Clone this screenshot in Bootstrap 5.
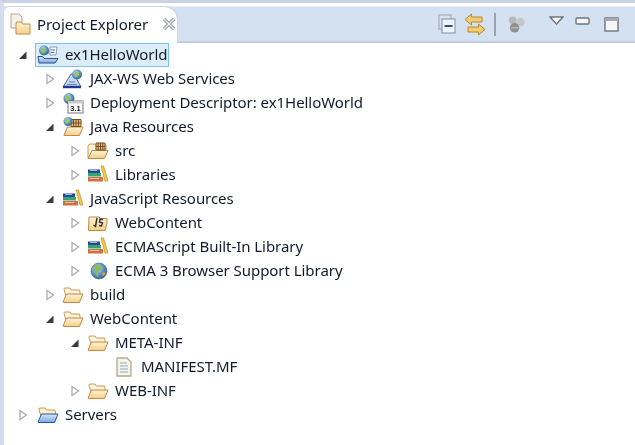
<!DOCTYPE html>
<html lang="en">
<head>
<meta charset="utf-8">
<title>Project Explorer</title>
<link href="https://cdn.jsdelivr.net/npm/bootstrap@5.3.0/dist/css/bootstrap.min.css" rel="stylesheet">
<style>
html,body{height:445px;overflow:hidden;background:#fff}
body{font-family:"Noto Sans","Open Sans",sans-serif;font-size:15px;color:#141a2b}
svg{display:block;flex:none}
.frame{height:445px;border-left:4px solid #d4ddec;border-top:3px solid #c9d1e2;background:#fff;filter:blur(.35px)}
.topbar{height:37px;margin-top:3px;background:#d3e1f1;border-top:1px solid #e3ecf6;border-bottom:2px solid #c3cfe0}
.viewtab{width:174px;height:37px;margin-top:-1px;margin-bottom:-2px;padding-left:6px;padding-bottom:2px;background:#fff;border-top-left-radius:6px;border-top-right-radius:14px;gap:5px;border:1px solid #cdd7e6;border-bottom:0;border-left:0}
.viewtab-x{margin-left:9px}
.toolset{padding-right:16px}
.sep-line{width:2px;height:23px;background:#9aa3ad}
.tool-a{margin-right:8px}
.tool-b{margin-right:8px}
.tool-c{margin-left:11px;margin-right:23px}
.tool-d{margin-top:-7px;margin-right:11px}
.tool-e{margin-top:-7px;margin-right:14px}
.trow{height:24px}
.trow .lbl{margin-top:-2px}
.lv0{padding-left:9px}.lv1{padding-left:36px}.lv2{padding-left:61px}.lv3{padding-left:87px}
.slot{width:20px;height:24px}
.ibox{margin-left:1px;padding-left:1px;padding-right:3px;gap:6px;height:24px}
.lv0 .ibox{margin-left:2px;padding-left:2px}
.lv0 .sel{background:#dcedf9;border:1px solid #7cc3e6;padding-right:1px;margin-left:2px;padding-left:1px}
.lbl{line-height:24px;white-space:nowrap;letter-spacing:-.05px}
</style>
</head>
<body>
<svg width="0" height="0" style="position:absolute">
<defs>
<linearGradient id="gf" x1="0" y1="0" x2="0" y2="1"><stop offset="0" stop-color="#fdf2d6"/><stop offset="1" stop-color="#f4d089"/></linearGradient>
<linearGradient id="gb" x1="0" y1="0" x2="0" y2="1"><stop offset="0" stop-color="#d6e7fb"/><stop offset="1" stop-color="#7aa8e0"/></linearGradient>
<radialGradient id="gg" cx=".4" cy=".35" r=".7"><stop offset="0" stop-color="#d8efff"/><stop offset=".5" stop-color="#5f9cc9"/><stop offset="1" stop-color="#2f5f8c"/></radialGradient>
<symbol id="a-closed" viewBox="0 0 12 14"><path d="M3 2.500L9.500 7 3 11.500z" fill="#fff" stroke="#a9adb1" stroke-width="1.300"/></symbol>
<symbol id="a-open" viewBox="0 0 12 14"><path d="M9.500 3.500v7.500H2z" fill="#3a3a3a"/></symbol>
<symbol id="i-folder" viewBox="0 0 22 22"><path d="M2 5.500l.5-1.500H8l1.500 2H17.500l.5 2.500V12H4z" fill="#fdf3d9" stroke="#c69a5c"/><path d="M1 18L4.500 10H21l-3.500 8.500H1.500z" fill="url(#gf)" stroke="#c2874a"/></symbol>
<symbol id="i-src" viewBox="0 0 22 22"><path d="M1 18V6l1.500-2H8v1l11 0v6z" fill="#fdf3d9" stroke="#c69a5c"/><path d="M1 18.500L5 10.500H21l-3.500 8H1.500z" fill="url(#gf)" stroke="#c2874a"/><path d="M9 3h9v7H9zM9 6.500h9M13.500 3v7M11.200 3v7M15.800 3v7" fill="#e3bd7f" stroke="#7a4f22" stroke-width="1"/></symbol>
<symbol id="i-jres" viewBox="0 0 22 22"><path d="M2 19l3.500-8H21l-3.500 8.500H2z" fill="url(#gf)" stroke="#c2874a"/><path d="M9 3.500h10v7H9zM9 7h10M14 3.500v7M11.500 3.500v7M16.500 3.500v7" fill="#e3bd7f" stroke="#7a4f22"/><circle cx="6" cy="5.500" r="4.500" fill="url(#gg)"/><path d="M3.500 2.500c2 0 3.500 1 4 2.500S6 7.500 4.500 7.500 2.500 5 3.500 2.500z" fill="#9cc060"/></symbol>
<symbol id="i-js" viewBox="0 0 22 22"><path d="M2 5h10l1.500 1.500H20v5l-2 7H1.500z" fill="url(#gf)" stroke="#b98a4a"/><path d="M10 6L8.500 14.500 6.500 13" stroke="#333" stroke-width="1.500" fill="none"/><path d="M16 7.500l-3-.5-.5 3 3 1-1 3-2.500-.5" stroke="#333" stroke-width="1.400" fill="none"/></symbol>
<symbol id="i-lib" viewBox="0 0 22 22"><path d="M14 2h2.500L21 17h-3z" fill="#f4c84f" stroke="#c48d22" stroke-width=".7"/><rect x="1" y="5.500" width="12" height="3.500" fill="#234a9c"/><rect x="1" y="9" width="13" height="3.500" fill="#33a673"/><rect x="1" y="13" width="15" height="4.500" fill="#d2703e"/><path d="M3 6.500h7M3 14.500h9" stroke="#e8e8e8" stroke-width=".7"/></symbol>
<symbol id="i-globe" viewBox="0 0 22 22"><circle cx="12" cy="11" r="8" fill="url(#gg)" stroke="#4d6f90" stroke-width=".6"/><path d="M9 4c3 1 4.500 2 5.500 3.500s-1 3-2.500 3.500-1 3.500-.5 6.500c-2-1-3.500-3.500-3.500-5.500S5.500 9 6 6.500z" fill="#8fb85a"/><path d="M15 13c1.500-1 3-1 3.500 0-.5 2-1.500 2.500-3 3z" fill="#c7a65a"/></symbol>
<symbol id="i-proj" viewBox="0 0 22 22"><path d="M13 3h7l-1 8h-6z" fill="#fff" stroke="#6b84a8" stroke-width=".8"/><path d="M1 12.500h4.500L7 14.500H21L18 19H2z" fill="url(#gb)" stroke="#2b4f8f"/><path d="M8 8l2 2 2-1.500M14 6h4M14 8.500h3.500" stroke="#4a6d9c" fill="none"/><circle cx="7" cy="6.500" r="5" fill="url(#gg)"/><path d="M4 3.500c2 0 4 1 4.500 3S6.500 9 5.500 9 3 6 4 3.500z" fill="#9cc060"/></symbol>
<symbol id="i-ws" viewBox="0 0 22 22"><path d="M1 19L9 6h3l7 13z" fill="#c9d6ee" stroke="#44639f"/><path d="M1 19h18" stroke="#1e3a8a" stroke-width="2.400"/><path d="M7 14h6M5 16.500h10" stroke="#6a83bb"/><circle cx="15" cy="6.500" r="5" fill="url(#gg)"/><path d="M13 3c2 0 4 1 4 3s-2 3-3 3-2-3-1-6z" fill="#a6c162"/></symbol>
<symbol id="i-dd" viewBox="0 0 22 22"><circle cx="7" cy="6.500" r="5.500" fill="url(#gg)"/><path d="M4 3c2 0 4 1 4.500 3S6.500 9 5 9 3 6 4 3z" fill="#9cc060"/><rect x="6" y="9" width="15" height="12" fill="#fff" stroke="#777"/><rect x="6" y="9" width="15" height="2.500" fill="#c9c9c9"/><text x="13.500" y="19" text-anchor="middle" font-family="Liberation Sans" font-weight="700" font-size="7.500" fill="#222">3.1</text></symbol>
<symbol id="i-file" viewBox="0 0 16 20"><path d="M1 1h10l4 4v14H1z" fill="#f5f4ea" stroke="#b5a98a" stroke-width="1.300"/><path d="M4 6h7M4 9h8M4 12h8M4 15h8" stroke="#8fa7c6" stroke-width="1.200"/></symbol>
<symbol id="i-servers" viewBox="0 0 22 22"><path d="M2 6l.5-2H8l1.500 2H18l.5 3V12H4z" fill="#fdf0cf" stroke="#c69a5c"/><path d="M1 18L4.500 10H21l-3.500 8.500H1.500z" fill="url(#gb)" stroke="#28549c"/></symbol>
</defs>
</svg>

<div class="frame">
  <div class="topbar d-flex align-items-stretch">
    <div class="viewtab d-flex align-items-center">
      <svg width="22" height="22" viewBox="0 0 22 22"><path d="M1 1h8l3 3v11H1z" fill="#f6f1e8" stroke="#b7a68d"/><path d="M6 11l.5-2h5l1 2h7.500v10H6z" fill="url(#gf)" stroke="#c48d44"/></svg>
      <span class="lbl">Project Explorer</span>
      <svg class="viewtab-x" width="14" height="14" viewBox="0 0 14 14"><path d="M2 2l10 10M12 2L2 12" stroke="#8f959c" stroke-width="3.400"/><path d="M2 2l10 10M12 2L2 12" stroke="#f4f5f6" stroke-width="1.400"/></svg>
    </div>
    <div class="toolset flex-grow-1 d-flex align-items-center justify-content-end">
      <svg class="tool-a" width="18" height="20" viewBox="0 0 18 20"><rect x="1" y="1" width="12" height="14" fill="#d9e3ee" stroke="#92a4b5"/><rect x="4" y="5" width="13" height="14" fill="#edf3f9" stroke="#7c92a8"/><rect x="6.500" y="11" width="8" height="2" fill="#27527f"/></svg>
      <svg class="tool-b" width="22" height="23" viewBox="0 0 22 23"><path d="M1 6.500L7.500 1v3H18v5H7.500v3z" fill="#f2cd6f" stroke="#b58a30"/><path d="M21 16.500L14.500 11v3H4v5h10.500v3z" fill="#f2cd6f" stroke="#b58a30"/></svg>
      <div class="sep-line"></div>
      <svg class="tool-c" width="19" height="19" viewBox="0 0 20 19"><circle cx="6" cy="5" r="4" fill="#b5b8b9"/><circle cx="14" cy="7" r="4.500" fill="#c4c6c7"/><circle cx="8" cy="13" r="5" fill="#8e9192"/><path d="M4 13h8" stroke="#c9cacb"/></svg>
      <svg class="tool-d" width="15" height="9" viewBox="0 0 15 9"><path d="M1 1h13L7.500 8z" fill="#fff" stroke="#6e757b" stroke-width="1.400"/></svg>
      <svg class="tool-e" width="15" height="8" viewBox="0 0 15 8"><rect x="1" y="1" width="13" height="6" rx="1" fill="#f4f6f8" stroke="#6e757b" stroke-width="1.400"/></svg>
      <svg width="15" height="15" viewBox="0 0 15 15"><rect x="1" y="1" width="13" height="13" fill="#f4f6f8" stroke="#6e757b" stroke-width="1.400"/><rect x="1" y="1" width="13" height="3" fill="#a4aab0"/></svg>
    </div>
  </div>
  <div class="treearea">
    <div class="trow lv0 d-flex align-items-center"><div class="slot d-flex align-items-center justify-content-center"><svg width="12" height="14"><use href="#a-open"/></svg></div><div class="ibox sel d-flex align-items-center"><svg width="22" height="22"><use href="#i-proj"/></svg><span class="lbl">ex1HelloWorld</span></div></div>
    <div class="trow lv1 d-flex align-items-center"><div class="slot d-flex align-items-center justify-content-center"><svg width="12" height="14"><use href="#a-closed"/></svg></div><div class="ibox d-flex align-items-center"><svg width="22" height="22"><use href="#i-ws"/></svg><span class="lbl">JAX-WS Web Services</span></div></div>
    <div class="trow lv1 d-flex align-items-center"><div class="slot d-flex align-items-center justify-content-center"><svg width="12" height="14"><use href="#a-closed"/></svg></div><div class="ibox d-flex align-items-center"><svg width="22" height="22"><use href="#i-dd"/></svg><span class="lbl">Deployment Descriptor: ex1HelloWorld</span></div></div>
    <div class="trow lv1 d-flex align-items-center"><div class="slot d-flex align-items-center justify-content-center"><svg width="12" height="14"><use href="#a-open"/></svg></div><div class="ibox d-flex align-items-center"><svg width="22" height="22"><use href="#i-jres"/></svg><span class="lbl">Java Resources</span></div></div>
    <div class="trow lv2 d-flex align-items-center"><div class="slot d-flex align-items-center justify-content-center"><svg width="12" height="14"><use href="#a-closed"/></svg></div><div class="ibox d-flex align-items-center"><svg width="22" height="22"><use href="#i-src"/></svg><span class="lbl">src</span></div></div>
    <div class="trow lv2 d-flex align-items-center"><div class="slot d-flex align-items-center justify-content-center"><svg width="12" height="14"><use href="#a-closed"/></svg></div><div class="ibox d-flex align-items-center"><svg width="22" height="22"><use href="#i-lib"/></svg><span class="lbl">Libraries</span></div></div>
    <div class="trow lv1 d-flex align-items-center"><div class="slot d-flex align-items-center justify-content-center"><svg width="12" height="14"><use href="#a-open"/></svg></div><div class="ibox d-flex align-items-center"><svg width="22" height="22"><use href="#i-lib"/></svg><span class="lbl">JavaScript Resources</span></div></div>
    <div class="trow lv2 d-flex align-items-center"><div class="slot d-flex align-items-center justify-content-center"><svg width="12" height="14"><use href="#a-closed"/></svg></div><div class="ibox d-flex align-items-center"><svg width="22" height="22"><use href="#i-js"/></svg><span class="lbl">WebContent</span></div></div>
    <div class="trow lv2 d-flex align-items-center"><div class="slot d-flex align-items-center justify-content-center"><svg width="12" height="14"><use href="#a-closed"/></svg></div><div class="ibox d-flex align-items-center"><svg width="22" height="22"><use href="#i-lib"/></svg><span class="lbl">ECMAScript Built-In Library</span></div></div>
    <div class="trow lv2 d-flex align-items-center"><div class="slot d-flex align-items-center justify-content-center"><svg width="12" height="14"><use href="#a-closed"/></svg></div><div class="ibox d-flex align-items-center"><svg width="22" height="22"><use href="#i-globe"/></svg><span class="lbl">ECMA 3 Browser Support Library</span></div></div>
    <div class="trow lv1 d-flex align-items-center"><div class="slot d-flex align-items-center justify-content-center"><svg width="12" height="14"><use href="#a-closed"/></svg></div><div class="ibox d-flex align-items-center"><svg width="22" height="22"><use href="#i-folder"/></svg><span class="lbl">build</span></div></div>
    <div class="trow lv1 d-flex align-items-center"><div class="slot d-flex align-items-center justify-content-center"><svg width="12" height="14"><use href="#a-open"/></svg></div><div class="ibox d-flex align-items-center"><svg width="22" height="22"><use href="#i-folder"/></svg><span class="lbl">WebContent</span></div></div>
    <div class="trow lv2 d-flex align-items-center"><div class="slot d-flex align-items-center justify-content-center"><svg width="12" height="14"><use href="#a-open"/></svg></div><div class="ibox d-flex align-items-center"><svg width="22" height="22"><use href="#i-folder"/></svg><span class="lbl">META-INF</span></div></div>
    <div class="trow lv3 d-flex align-items-center"><div class="slot"></div><div class="ibox d-flex align-items-center"><svg width="22" height="20" viewBox="0 0 22 20"><use href="#i-file" width="16" height="20" x="3"/></svg><span class="lbl">MANIFEST.MF</span></div></div>
    <div class="trow lv2 d-flex align-items-center"><div class="slot d-flex align-items-center justify-content-center"><svg width="12" height="14"><use href="#a-closed"/></svg></div><div class="ibox d-flex align-items-center"><svg width="22" height="22"><use href="#i-folder"/></svg><span class="lbl">WEB-INF</span></div></div>
    <div class="trow lv0 d-flex align-items-center"><div class="slot d-flex align-items-center justify-content-center"><svg width="12" height="14"><use href="#a-closed"/></svg></div><div class="ibox d-flex align-items-center"><svg width="22" height="22"><use href="#i-servers"/></svg><span class="lbl">Servers</span></div></div>
  </div>
</div>
<script src="https://cdn.jsdelivr.net/npm/bootstrap@5.3.0/dist/js/bootstrap.bundle.min.js"></script>
</body>
</html>
